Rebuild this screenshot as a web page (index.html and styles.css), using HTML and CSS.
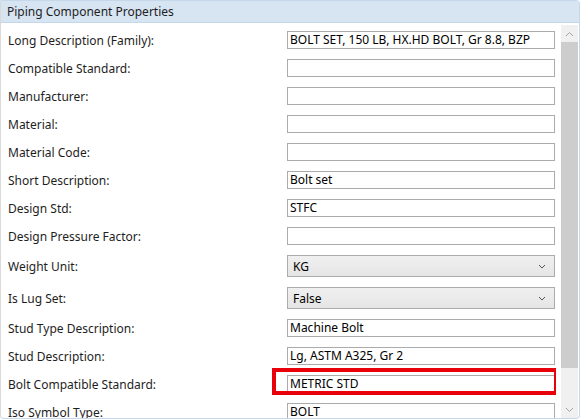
FILE: index.html
```html
<!DOCTYPE html>
<html>
<head>
<meta charset="utf-8">
<link rel="stylesheet" href="styles.css">
</head>
<body>
<div class="panel">
  <div class="header">Piping Component Properties</div>
  <div class="body">
    <div class="form">
      <div class="row"><span class="label">Long Description (Family):</span><div class="text">BOLT SET, 150 LB, HX.HD BOLT, Gr 8.8, BZP</div></div>
      <div class="row"><span class="label">Compatible Standard:</span><div class="text"></div></div>
      <div class="row"><span class="label">Manufacturer:</span><div class="text"></div></div>
      <div class="row"><span class="label">Material:</span><div class="text"></div></div>
      <div class="row"><span class="label">Material Code:</span><div class="text"></div></div>
      <div class="row"><span class="label">Short Description:</span><div class="text">Bolt set</div></div>
      <div class="row"><span class="label">Design Std:</span><div class="text">STFC</div></div>
      <div class="row"><span class="label">Design Pressure Factor:</span><div class="text"></div></div>
      <div class="row combo-row"><span class="label">Weight Unit:</span><div class="combo"><span>KG</span><svg class="chev" width="8" height="5" viewBox="0 0 8 5"><path d="M1 1 L4 4 L7 1" fill="none" stroke="#555" stroke-width="1"/></svg></div></div>
      <div class="row combo-row"><span class="label">Is Lug Set:</span><div class="combo"><span>False</span><svg class="chev" width="8" height="5" viewBox="0 0 8 5"><path d="M1 1 L4 4 L7 1" fill="none" stroke="#555" stroke-width="1"/></svg></div></div>
      <div class="row"><span class="label">Stud Type Description:</span><div class="text">Machine Bolt</div></div>
      <div class="row"><span class="label">Stud Description:</span><div class="text">Lg, ASTM A325, Gr 2</div></div>
      <div class="row highlight-row"><span class="label">Bolt Compatible Standard:</span><div class="text">METRIC STD</div><div class="highlight"></div></div>
      <div class="row"><span class="label">Iso Symbol Type:</span><div class="text">BOLT</div></div>
    </div>
    <div class="scrollbar">
      <div class="arrow"><svg width="9" height="6" viewBox="0 0 9 6"><path d="M1 5 L4.5 1.5 L8 5" fill="none" stroke="#a3a3a3" stroke-width="1"/></svg></div>
      <div class="thumb"></div>
      <div class="track"></div>
      <div class="arrow"><svg width="9" height="6" viewBox="0 0 9 6"><path d="M1 1 L4.5 4.5 L8 1" fill="none" stroke="#a3a3a3" stroke-width="1"/></svg></div>
    </div>
  </div>
</div>
</body>
</html>
```
FILE: styles.css
```css
html, body {
  margin: 0;
  padding: 0;
  background: #ffffff;
}
body {
  font-family: "Segoe UI", "Noto Sans", "Open Sans", sans-serif;
  font-size: 12px;
  color: #1e1e1e;
}
.panel {
  width: 578px;
  height: 417px;
  border: 1px solid #c5d7ea;
  border-left-color: #d9d9d9;
  border-radius: 0 4px 4px 4px;
  overflow: hidden;
  display: flex;
  flex-direction: column;
  position: relative;
}
.header {
  height: 21px;
  line-height: 21px;
  background: #d7e4f2;
  border-bottom: 1px solid #c5d7ea;
  padding-left: 6px;
  color: #1e1e1e;
  flex: none;
}
.body {
  flex: 1;
  display: flex;
  min-height: 0;
}
.form {
  flex: 1;
  padding-top: 8px;
  overflow: hidden;
}
.row {
  display: grid;
  grid-template-columns: 286px 268px;
  align-items: center;
  margin-bottom: 10px;
  position: relative;
}
.label {
  padding-left: 7px;
  white-space: nowrap;
}
.text {
  box-sizing: border-box;
  height: 18px;
  border: 1px solid #ababab;
  background: #fff;
  padding-left: 2px;
  line-height: 16px;
  white-space: nowrap;
  overflow: hidden;
  color: #000;
}
.combo {
  box-sizing: border-box;
  height: 22px;
  border: 1px solid #acacac;
  background: linear-gradient(#f0f0f0, #e5e5e5);
  padding: 0 8px 0 5px;
  display: flex;
  align-items: center;
  justify-content: space-between;
  color: #000;
}
.highlight {
  position: absolute;
  left: 271px;
  top: -7px;
  width: 286px;
  height: 27px;
  box-sizing: border-box;
  border: 4px solid #e8000b;
}
.scrollbar {
  width: 17px;
  margin: 2px 1px 0 5px;
  background: #f0f0f0;
  display: flex;
  flex-direction: column;
  flex: none;
}
.arrow {
  height: 17px;
  display: flex;
  align-items: center;
  justify-content: center;
  flex: none;
}
.thumb {
  height: 326px;
  background: #cdcdcd;
  flex: none;
}
.track {
  flex: 1;
}
```
